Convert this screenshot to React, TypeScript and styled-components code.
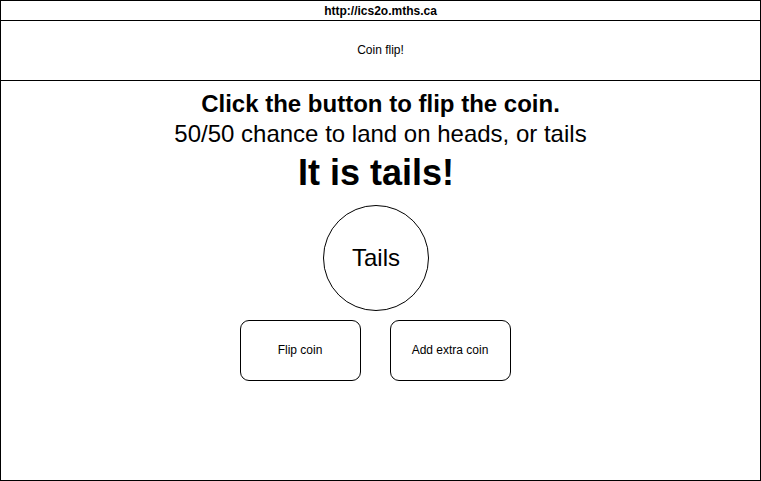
import React from "react";
import styled, { createGlobalStyle } from "styled-components";

const Global = createGlobalStyle`
  html, body { margin: 0; padding: 0; background: #fff; }
  body { font-family: "Liberation Sans", Arial, Helvetica, sans-serif; color: #000; }
`;

const Frame = styled.div`
  box-sizing: border-box;
  width: 761px;
  height: 481px;
  border: 1px solid #000;
  display: flex;
  flex-direction: column;
`;

const UrlBar = styled.div`
  height: 19px;
  border-bottom: 1px solid #000;
  display: flex;
  align-items: center;
  justify-content: center;
  font-size: 12px;
  font-weight: bold;
`;

const Header = styled.div`
  box-sizing: border-box;
  height: 60px;
  padding-bottom: 2px;
  border-bottom: 1px solid #000;
  display: flex;
  align-items: center;
  justify-content: center;
  font-size: 12px;
`;

const Main = styled.div`
  flex: 1;
  display: flex;
  flex-direction: column;
  align-items: center;
  padding-top: 8px;
`;

const Line = styled.div<{ $size: number; $bold?: boolean; $lh: number }>`
  font-size: ${(p) => p.$size}px;
  font-weight: ${(p) => (p.$bold ? "bold" : "normal")};
  line-height: ${(p) => p.$lh}px;
  white-space: nowrap;
`;

const CoinGroup = styled.div`
  display: flex;
  flex-direction: column;
  align-items: center;
  margin-right: 9px;
`;

const Coin = styled.div`
  box-sizing: border-box;
  width: 106px;
  height: 106px;
  margin-top: 8px;
  padding-bottom: 1px;
  border: 1px solid #000;
  border-radius: 50%;
  display: flex;
  align-items: center;
  justify-content: center;
  font-size: 24px;
`;

const Buttons = styled.div`
  display: flex;
  gap: 29px;
  margin-top: 9px;
  margin-right: 2px;
`;

const Button = styled.div`
  box-sizing: border-box;
  width: 121px;
  height: 61px;
  padding-bottom: 2px;
  border: 1px solid #000;
  border-radius: 9px;
  display: flex;
  align-items: center;
  justify-content: center;
  font-size: 12px;
`;

export default function App() {
  return (
    <>
      <Global />
      <Frame>
        <UrlBar>http://ics2o.mths.ca</UrlBar>
        <Header>Coin flip!</Header>
        <Main>
          <Line $size={24} $bold $lh={30}>Click the button to flip the coin.</Line>
          <Line $size={24} $lh={30}>50/50 chance to land on heads, or tails</Line>
          <CoinGroup>
            <Line $size={36} $bold $lh={48}>It is tails!</Line>
            <Coin>Tails</Coin>
            <Buttons>
              <Button>Flip coin</Button>
              <Button>Add extra coin</Button>
            </Buttons>
          </CoinGroup>
        </Main>
      </Frame>
    </>
  );
}
